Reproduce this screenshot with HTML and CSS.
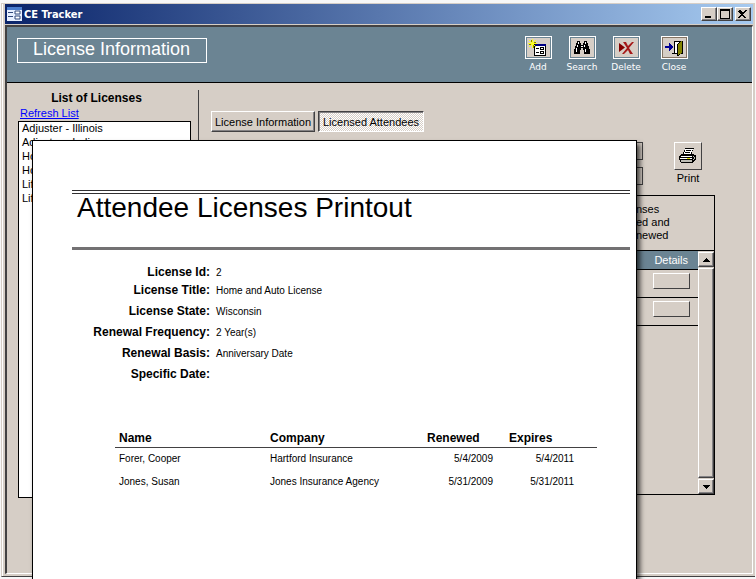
FILE: index.html
```html
<!DOCTYPE html>
<html lang="en">
<head>
    <meta charset="UTF-8">
    <meta name="viewport" content="width=device-width, initial-scale=1.0">
    <title>CE Tracker</title>
    <link rel="stylesheet" href="styles.css">
</head>
<body>

<div class="window">
    <!-- Title bar -->
    <div class="title-bar">
        <svg class="app-icon" width="15" height="14" viewBox="0 0 15 14" shape-rendering="crispEdges">
            <rect width="15" height="14" fill="#4a7dce"/>
            <rect y="3" width="15" height="11" fill="#e7efff"/>
            <path d="M1 5h5v1H1zM1 9h5v1H1z" fill="#31497b"/>
            <path d="M8 4h5v3H8zM8 9h5v3H8z" fill="#fff" stroke="#31497b" shape-rendering="auto"/>
        </svg>
        <span class="title-text">CE Tracker</span>
        <button class="caption-btn" aria-label="Minimize">
            <svg width="12" height="10" shape-rendering="crispEdges"><path d="M2 7h6v2H2z"/></svg>
        </button>
        <button class="caption-btn" aria-label="Maximize">
            <svg width="12" height="10" shape-rendering="crispEdges"><path d="M1 0h10v10H1zM2 2v7h8V2z" fill-rule="evenodd"/></svg>
        </button>
        <button class="caption-btn close" aria-label="Close window">
            <svg width="12" height="10" shape-rendering="crispEdges"><path d="M2 1h2v1h1v1h2v-1h1v-1h2v1h-1v1h-1v1h-1v1h-1v1h1v1h1v1h1v1h-2v-1h-1v-1h-2v1h-1v1h-2v-1h1v-1h1v-1h1v-1h-1v-1h-1v-1h-1z"/></svg>
        </button>
    </div>

    <div class="form">
        <!-- Form header with toolbar -->
        <div class="form-header">
            <h1>License Information</h1>
            <div class="toolbar">
                <div class="tool">
                    <button id="add" aria-labelledby="add-label">
                        <svg width="20" height="18" viewBox="0 0 20 18" shape-rendering="crispEdges">
                            <path d="M6 5h12v12H6z" fill="#000"/>
                            <path d="M7 7h10v9H7z" fill="#fff"/>
                            <path d="M7 5h11v2H7z" fill="#000084"/>
                            <path d="M8 9h3v1H8zM8 13h3v1H8zM12 8h4v3h-4zM12 12h4v3h-4z" fill="#000"/>
                            <path d="M13 9h2v1h-2zM13 13h2v1h-2z" fill="#fff"/>
                            <path d="M4 0h1v9H4zM0 4h9v1H0zM1 1h1v1H1zM2 2h1v1H2zM3 3h3v3H3zM6 2h1v1H6zM7 1h1v1H7zM2 6h1v1H2zM1 7h1v1H1zM6 6h1v1H6zM7 7h1v1H7z" fill="#ffff21"/>
                            <path d="M3 1h1v2H3zM6 3h2v1H6zM1 5h2v1H1zM5 6h1v3H5z" fill="#848400"/>
                        </svg>
                    </button>
                    <span id="add-label">Add</span>
                </div>
                <div class="tool">
                    <button id="search" aria-labelledby="search-label">
                        <svg width="20" height="18" viewBox="0 0 20 18" shape-rendering="crispEdges">
                            <path d="M5 2h3v2h1v2h2V4h1V2h3v2h1v3h1v3h1v5h-6v-4h-1V9h-2v2H8v4H2v-5h1V7h1V4h1z"/>
                            <path d="M6 3h1v2H6zM5 6h1v2H5zM4 9h1v4H4zM13 3h1v2h-1zM12 6h1v2h-1zM13 10h1v3h-1zM9 7h2v1H9z" fill="#fff"/>
                        </svg>
                    </button>
                    <span id="search-label">Search</span>
                </div>
                <div class="tool">
                    <button id="delete" aria-labelledby="delete-label">
                        <svg width="20" height="18" viewBox="0 0 20 18">
                            <path d="M3 4v9l6-4.500z" fill="#840000"/>
                            <path d="M7 3h3l2 4 4-4h2l-5 6 4 6h-3l-2-4-4 4H6l5-6z" fill="#a51818"/>
                        </svg>
                    </button>
                    <span id="delete-label">Delete</span>
                </div>
                <div class="tool last">
                    <button id="close" class="focused" aria-labelledby="close-label">
                        <svg width="20" height="18" viewBox="0 0 20 18" shape-rendering="crispEdges">
                            <path d="M10 2h8v13h-8z"/>
                            <path d="M11 3h6v11h-6z" fill="#fff"/>
                            <path d="M16 2h1v1h-1v1h-1v1h-1v12h1v-1h1v-1h1v-1h1V2z" fill="#848400"/>
                            <path d="M13 5h1v12h-1zM14 4h1v1h-1zM15 3h1v1h-1zM14 16h1v1h-1zM15 15h1v1h-1zM18 2h1v13h-1zM8 14h5v1H8z"/>
                            <path d="M1 7h4V4h1v1h1v1h1v1h1v2H8v1H7v1H6v1H5V9H1z" fill="#000094"/>
                        </svg>
                    </button>
                    <span id="close-label">Close</span>
                </div>
            </div>
        </div>

        <div class="form-body">
            <!-- License list -->
            <div class="license-list">
                <label for="licenses">List of Licenses</label>
                <a href="#">Refresh List</a>
                <select id="licenses" size="20">
                    <option>Adjuster - Illinois</option>
                    <option>Adjuster - Indiana</option>
                    <option>Home</option>
                    <option>Home</option>
                    <option>Life</option>
                    <option>Life</option>
                </select>
            </div>

            <!-- Selected license -->
            <div class="license-detail">
                <div class="tabs">
                    <button class="tab">License Information</button>
                    <button class="tab active">Licensed Attendees</button>
                </div>
                <div class="filters">
                    <div class="fields">
                        <input type="text" aria-label="License">
                        <input type="text" aria-label="State">
                    </div>
                    <div class="print">
                        <button aria-labelledby="print-label">
                            <svg width="18" height="16" viewBox="0 0 18 16" shape-rendering="crispEdges">
                                <path d="M6 0h9v1h-1v2h-1v3h2v1h2v5h-1v1h-1v1h-1v1H2v-1H1v-2H0V8h1V7h1V6h2V4h1V2h1z"/>
                                <path d="M6 1h8v1h-1v2h-1v2H5V4h1z" fill="#fff"/>
                                <path d="M7 2h5v1H7zM6 4h5v1H6z"/>
                                <path d="M2 8h11v1H2zM1 10h12v1H1z" fill="#fff"/>
                                <path d="M2 12h11v2H2zM14 8h1v1h-1zM15 9h1v2h-1zM14 11h1v1h-1z" fill="#bdbdb5"/>
                                <path d="M8 10h3v1H8z" fill="#e7e700"/>
                            </svg>
                        </button>
                        <span id="print-label">Print</span>
                    </div>
                </div>
                <div class="attendees">
                    <p class="note">nses<br>ed and<br>newed</p>
                    <div class="attendees-body">
                        <table>
                            <thead>
                                <tr><th>Details</th></tr>
                            </thead>
                            <tbody>
                                <tr><td><button aria-label="Details, row 1"></button></td></tr>
                                <tr><td><button aria-label="Details, row 2"></button></td></tr>
                            </tbody>
                        </table>
                        <div class="scrollbar">
                            <button aria-label="Scroll up">
                                <svg width="7" height="4" shape-rendering="crispEdges"><path d="M3 0h1v1h1v1h1v1h1v1H0V3h1V2h1V1h1z"/></svg>
                            </button>
                            <div class="thumb"></div>
                            <button aria-label="Scroll down">
                                <svg width="7" height="4" shape-rendering="crispEdges"><path d="M0 0h7v1H6v1H5v1H4v1H3V3H2V2H1V1H0z"/></svg>
                            </button>
                        </div>
                    </div>
                </div>
            </div>
        </div>
    </div>
</div>

<!-- Report page lying over the form -->
<div class="report">
    <h2>Attendee Licenses Printout</h2>
    <dl>
        <div><dt>License Id:</dt><dd>2</dd></div>
        <div><dt>License Title:</dt><dd>Home and Auto License</dd></div>
        <div><dt>License State:</dt><dd>Wisconsin</dd></div>
        <div><dt>Renewal Frequency:</dt><dd>2 Year(s)</dd></div>
        <div><dt>Renewal Basis:</dt><dd>Anniversary Date</dd></div>
        <div><dt>Specific Date:</dt><dd></dd></div>
    </dl>
    <table class="report-table">
        <thead>
            <tr>
                <th class="name">Name</th>
                <th class="company">Company</th>
                <th class="renewed">Renewed</th>
                <th class="expires">Expires</th>
            </tr>
        </thead>
        <tbody>
            <tr>
                <td>Forer, Cooper</td>
                <td>Hartford Insurance</td>
                <td class="date">5/4/2009</td>
                <td class="date">5/4/2011</td>
            </tr>
            <tr>
                <td>Jones, Susan</td>
                <td>Jones Insurance Agency</td>
                <td class="date">5/31/2009</td>
                <td class="date">5/31/2011</td>
            </tr>
        </tbody>
    </table>
</div>

</body>
</html>
```
FILE: styles.css
```css
* {
    box-sizing: border-box;
}
body {
    margin: 0;
    height: 100vh;
    padding: 3px 1px 2px 1px;
    background-color: #f7f7f7;
    font-family: "Liberation Sans", Arial, sans-serif;
    font-size: 11px;
    color: #000;
    position: relative;
    overflow: hidden;
}
button, input, select {
    font: inherit;
    color: inherit;
    margin: 0;
    padding: 0;
    border-radius: 0;
    outline: none;
}
button {
    display: flex;
    align-items: center;
    justify-content: center;
    background-color: #d6cec6;
    border: 1px solid;
    border-color: #fff #424142 #424142 #fff;
}
h1, h2, p, dl, dd {
    margin: 0;
    font-weight: normal;
}
table {
    border-collapse: collapse;
}
th, td {
    padding: 0;
}
.window {
    display: flex;
    flex-direction: column;
    height: 100%;
    padding: 0 2px 2px 3px;
    background-color: #d6cec6;
    border: 1px solid #d6cec6;
    border-bottom-color: #424142;
    border-right-width: 0;
    box-shadow: inset 1px 0 #fff;
}

/* Title bar */
.title-bar {
    display: flex;
    align-items: center;
    height: 20px;
    padding: 0 2px;
    background: linear-gradient(to right, #0a246a, #a6caf0);
}
.title-text {
    flex: 1;
    margin-left: 2px;
    color: #fff;
    font-family: "DejaVu Sans Condensed", "DejaVu Sans", sans-serif;
    font-weight: bold;
}
.caption-btn {
    width: 16px;
    height: 14px;
    box-shadow: inset -1px -1px #848284;
}
.caption-btn.close {
    margin-left: 2px;
}

/* Form */
.form {
    flex: 1;
    display: flex;
    flex-direction: column;
    margin-top: 1px;
    border: 1px solid #fff;
    border-top: 2px solid #424142;
    border-left: 2px solid #424142;
}
.form-header {
    display: flex;
    justify-content: space-between;
    height: 56px;
    padding: 9px 56px 0 10px;
    background-color: #6b8493;
    border-bottom: 1px solid #000;
    color: #fff;
}
.form-header h1 {
    width: 190px;
    height: 25px;
    margin-top: 2px;
    padding-left: 15px;
    border: 1px solid #fff;
    font-size: 18px;
    line-height: 21px;
    white-space: nowrap;
}
.toolbar {
    display: flex;
}
.tool {
    display: flex;
    flex-direction: column;
    align-items: center;
    width: 44px;
    font-family: "DejaVu Sans", sans-serif;
    font-size: 9px;
    line-height: 17px;
}
.tool.last {
    margin-left: 4px;
}
.tool button {
    width: 27px;
    height: 23px;
    border-color: #fff;
    box-shadow: inset 0 0 0 1px #6b8493;
}
.tool .focused {
    box-shadow: inset 0 0 0 1px #847363;
}
.form-body {
    flex: 1;
    display: flex;
    padding-top: 7px;
}

/* License list */
.license-list {
    display: flex;
    flex-direction: column;
    width: 192px;
    padding: 0 7px 75px 11px;
    border-right: 1px solid #424142;
}
.license-list label {
    padding-right: 16px;
    font-size: 12px;
    font-weight: bold;
    line-height: 16px;
    text-align: center;
}
.license-list a {
    padding-left: 2px;
    color: #0000ff;
    line-height: 15px;
}
.license-list select {
    flex: 1;
    border: 1px solid #000;
    background-color: #fff;
    overflow: hidden;
}
.license-list option {
    min-height: 14px;
    padding: 0 3px;
    line-height: 14px;
}

/* License detail */
.license-detail {
    flex: 1;
    display: flex;
    flex-direction: column;
    padding: 21px 37px 78px 12px;
}
.tabs {
    display: flex;
    gap: 3px;
}
.tab {
    height: 21px;
    width: 104px;
    box-shadow: inset -1px -1px #848284;
}
.tab.active {
    width: 106px;
    border-color: #424142 #fff #fff #424142;
    box-shadow: inset 1px 1px #848284;
    background: repeating-conic-gradient(#fff 0 25%, #d6cec6 0 50%) 0 0 / 2px 2px;
}
.filters {
    display: flex;
    gap: 31px;
    height: 63px;
    padding-top: 10px;
}
.fields {
    flex: 1;
    display: flex;
    flex-direction: column;
    align-items: flex-end;
    gap: 7px;
}
.fields input {
    width: 60%;
    height: 18px;
    border: 1px solid #424142;
    background-color: #d6cec6;
}
.print {
    display: flex;
    flex-direction: column;
    align-items: center;
    margin-right: 13px;
    line-height: 16px;
}
.print button {
    width: 28px;
    height: 28px;
}
.attendees {
    flex: 1;
    display: flex;
    flex-direction: column;
    border: 1px solid #000;
}
.note {
    height: 54px;
    width: 78px;
    margin-left: auto;
    padding-top: 7px;
    line-height: 13px;
}
.attendees-body {
    flex: 1;
    display: flex;
    align-items: flex-start;
    border-top: 1px solid #000;
}
.attendees-body table {
    flex: 1;
}
.attendees-body th {
    height: 18px;
    padding-right: 10px;
    background-color: #6b8493;
    border-bottom: 1px solid #000;
    color: #fff;
    font-weight: normal;
    text-align: right;
}
.attendees-body td {
    height: 28px;
    padding: 3px 8px 0 0;
    border-bottom: 1px solid #000;
    vertical-align: top;
}
.attendees-body td button {
    width: 37px;
    height: 16px;
    margin-left: auto;
}
.scrollbar {
    align-self: stretch;
    display: flex;
    flex-direction: column;
    gap: 1px;
    width: 16px;
    padding-top: 1px;
}
.scrollbar button, .thumb {
    height: 15px;
    border: 1px solid;
    border-color: #fff #424142 #424142 #fff;
    box-shadow: inset -1px -1px #848284;
}
.scrollbar .thumb {
    flex: 1;
}

/* Report page */
.report {
    position: absolute;
    top: 140px;
    right: 119px;
    bottom: 0;
    left: 32px;
    padding: 49px 6px 0 39px;
    background-color: #fff;
    border: 1px solid #000;
    border-bottom: none;
    box-shadow: 3px 4px 5px rgba(0, 0, 0, 0.7);
}
.report h2 {
    height: 60px;
    padding-left: 5px;
    border-top: 4px double #313031;
    border-bottom: 3px solid #737173;
    font-size: 28px;
    line-height: 28px;
}
.report dl {
    padding-top: 15px;
}
.report dl div {
    display: flex;
    gap: 6px;
    line-height: 21px;
}
.report dl div:first-child {
    line-height: 15px;
}
.report dt {
    width: 138px;
    font-size: 12px;
    font-weight: bold;
    text-align: right;
}
.report dd {
    font-size: 10px;
}
.report-table {
    width: calc(100% - 76px);
    margin: 44px 0 0 43px;
    table-layout: fixed;
    font-size: 10px;
}
.report-table th {
    height: 18px;
    border-bottom: 1px solid #424142;
    font-size: 12px;
    text-align: left;
}
.report-table td {
    height: 23px;
    vertical-align: middle;
}
.report-table th:first-child, .report-table td:first-child {
    padding-left: 4px;
}
.report-table .company {
    width: 157px;
}
.report-table .name {
    width: 155px;
}
.report-table .renewed {
    width: 82px;
}
.report-table .date {
    padding-right: 16px;
    text-align: right;
}
.report-table .date:last-child {
    padding-right: 23px;
}
```
